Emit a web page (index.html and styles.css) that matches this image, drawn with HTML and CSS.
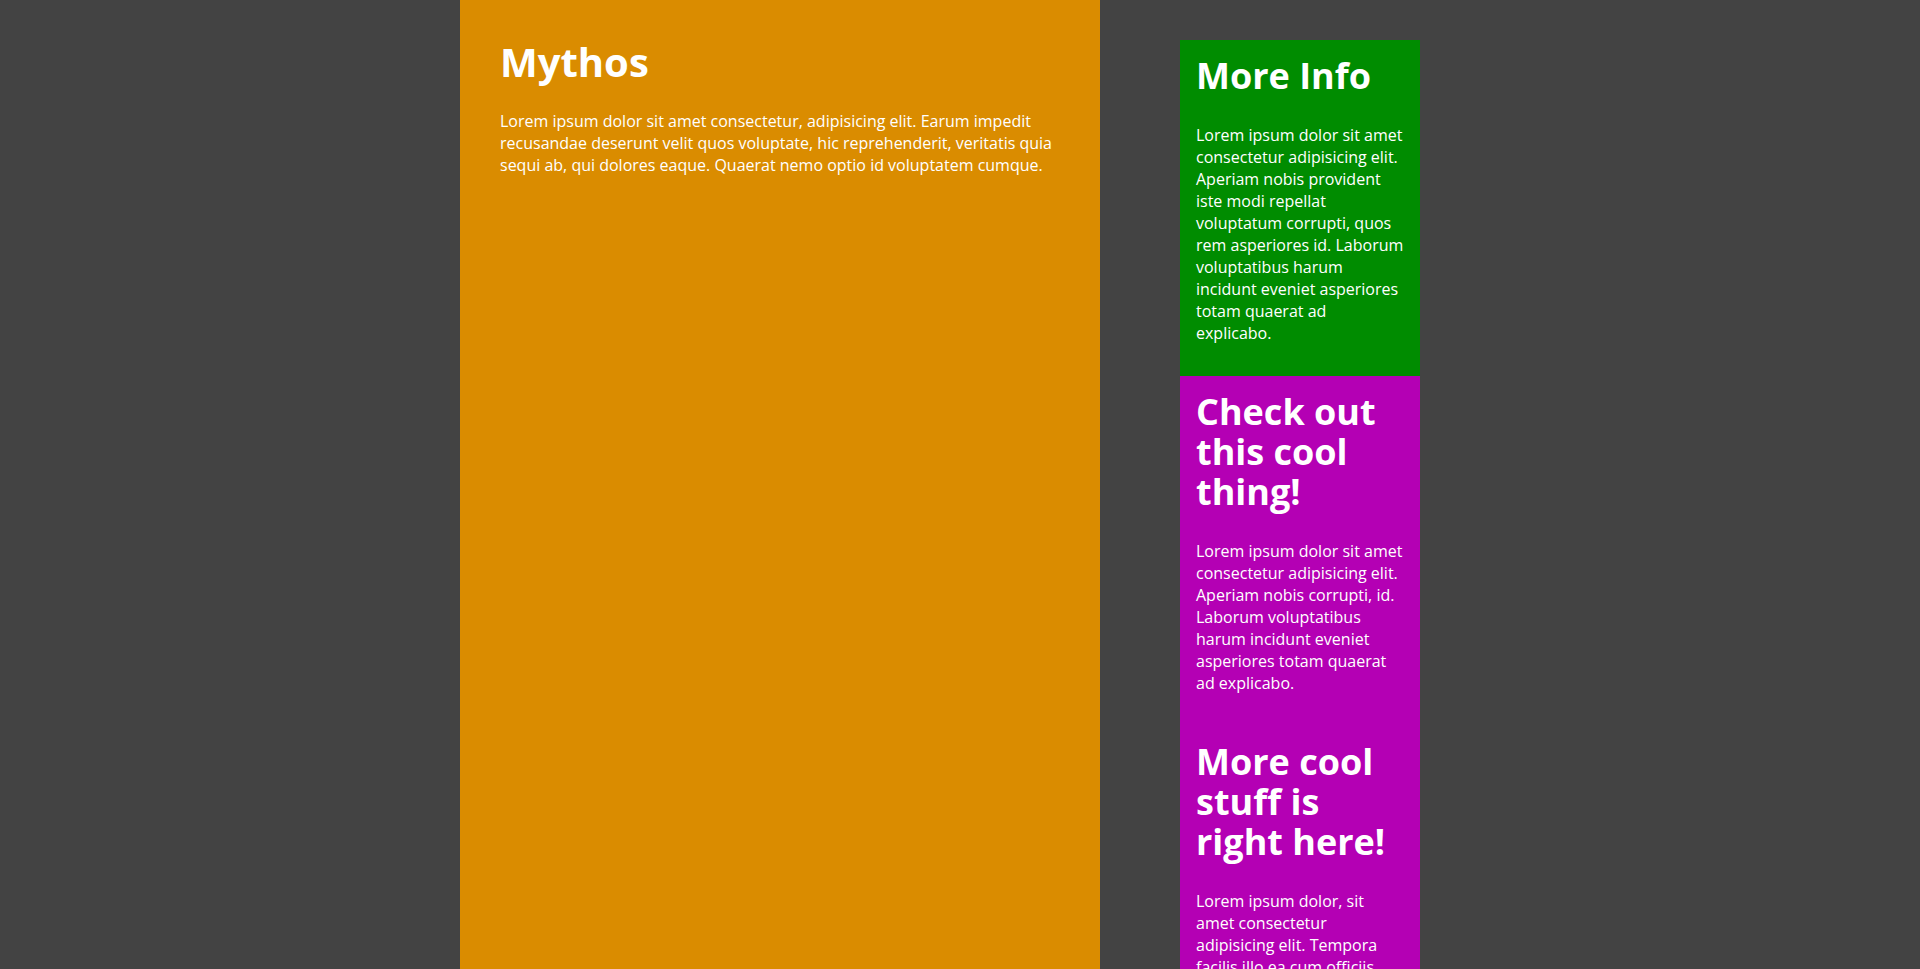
FILE: index.html
```html
<!DOCTYPE html>
<html lang="en">
<head>
<meta charset="utf-8">
<title>Mythos</title>
<link rel="stylesheet" href="styles.css">
</head>
<body>
<div class="wrapper">
  <main class="main">
    <h1 class="page-title">Mythos</h1>
    <p class="text">Lorem ipsum dolor sit amet consectetur, adipisicing elit. Earum impedit recusandae deserunt velit quos voluptate, hic reprehenderit, veritatis quia sequi ab, qui dolores eaque. Quaerat nemo optio id voluptatem cumque.</p>
  </main>
  <aside class="sidebar">
    <section class="box box-green">
      <h2 class="title">More Info</h2>
      <p class="text">Lorem ipsum dolor sit amet consectetur adipisicing elit. Aperiam nobis provident iste modi repellat voluptatum corrupti, quos rem asperiores id. Laborum voluptatibus harum incidunt eveniet asperiores totam quaerat ad explicabo.</p>
    </section>
    <section class="box box-purple">
      <h2 class="title">Check out this cool thing!</h2>
      <p class="text">Lorem ipsum dolor sit amet consectetur adipisicing elit. Aperiam nobis corrupti, id. Laborum voluptatibus harum incidunt eveniet asperiores totam quaerat ad explicabo.</p>
    </section>
    <section class="box box-purple">
      <h2 class="title">More cool stuff is right here!</h2>
      <p class="text">Lorem ipsum dolor, sit amet consectetur adipisicing elit. Tempora facilis illo ea cum officiis quibusdam, voluptas nesciunt dolorum ipsa iure.</p>
    </section>
  </aside>
</div>
</body>
</html>
```

FILE: styles.css
```css
* {
  box-sizing: border-box;
}

html,
body {
  margin: 0;
  padding: 0;
}

body {
  background: #434343;
  color: #ffffff;
  font-family: "Open Sans", "Noto Sans", sans-serif;
  font-size: 16px;
  line-height: 22px;
}

.wrapper {
  display: flex;
  align-items: flex-start;
  gap: 80px;
  width: 1000px;
  margin: 0 auto;
}

.main {
  flex: 0 0 640px;
  min-height: 100vh;
  padding: 40px;
  background: #da8c00;
}

.sidebar {
  flex: 0 0 240px;
  margin-top: 40px;
}

.box {
  padding: 16px;
}

.box-green {
  background: #008c00;
}

.box-purple {
  background: #b400b4;
}

.page-title {
  margin: 0 0 26px;
  font-size: 40px;
  line-height: 44px;
  font-weight: 700;
}

.title {
  margin: 0 0 28px;
  font-size: 36px;
  line-height: 40px;
  font-weight: 700;
}

.text {
  margin: 0 0 16px;
}

.main .text {
  margin: 0;
}
```
